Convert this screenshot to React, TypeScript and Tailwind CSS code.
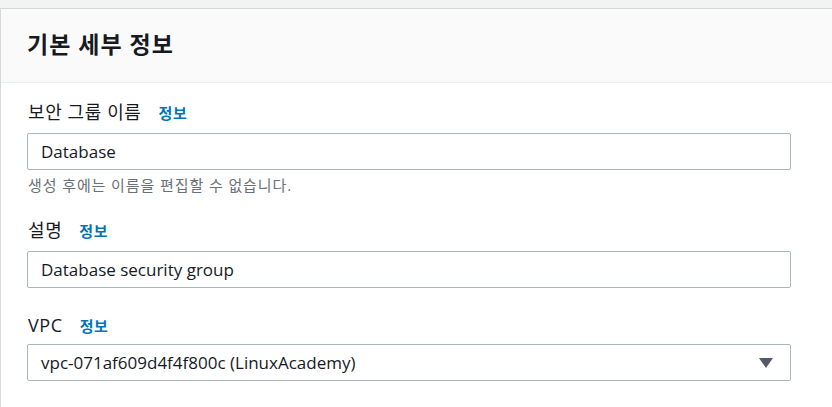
const kr = "font-['Open_Sans','Noto_Sans_CJK_KR',sans-serif]";

function Label({ text }: { text: string }) {
  return (
    <div className="flex items-baseline h-[22px] ml-[1px]">
      <span className="text-[18px] leading-[22px] tracking-[0.6px] text-[#16191f]">{text}</span>
      <a className="ml-[17px] text-[15px] font-bold tracking-[0.6px] text-[#0073bb]">정보</a>
    </div>
  );
}

function Box({ value, select }: { value: string; select?: boolean }) {
  return (
    <div className="w-[764px] h-[37px] border border-[#aab7b8] rounded-[2px] bg-white flex items-center pl-[13px] pr-[17px]">
      <span className="flex-1 text-[17px] text-[#16191f]">{value}</span>
      {select && (
        <svg width="14" height="10" viewBox="0 0 14 10">
          <path d="M0 0 L14 0 L7 10 Z" fill="#545b64" />
        </svg>
      )}
    </div>
  );
}

export default function App() {
  return (
    <div className={`${kr} bg-[#f2f3f3] pt-2 h-[407px] overflow-hidden`}>
      <div className="bg-white border-l border-t border-[#d5dbdb] h-full">
        <div className="h-[74px] bg-[#fafafa] border-b border-[#eaeded] flex items-center pl-[26px]">
          <h2 className="text-[23px] font-bold tracking-[1px] text-[#16191f] -mt-[2px]">기본 세부 정보</h2>
        </div>
        <div className="pl-[26px]">
          <div className="pt-[18px]">
            <Label text="보안 그룹 이름" />
          </div>
          <div className="mt-[10px]">
            <Box value="Database" />
          </div>
          <p className="mt-[5px] ml-[1px] h-[20px] leading-[20px] text-[15px] tracking-[0.9px] text-[#687078]">
            생성 후에는 이름을 편집할 수 없습니다.
          </p>
          <div className="mt-[24px]">
            <Label text="설명" />
          </div>
          <div className="mt-[10px]">
            <Box value="Database security group" />
          </div>
          <div className="mt-[26px]">
            <Label text="VPC" />
          </div>
          <div className="mt-[8px]">
            <Box value="vpc-071af609d4f4f800c (LinuxAcademy)" select />
          </div>
        </div>
      </div>
    </div>
  );
}
